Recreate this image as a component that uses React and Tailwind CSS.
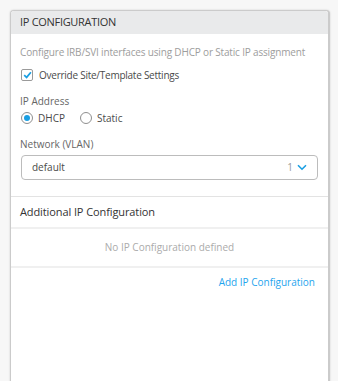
import React, { useState } from "react";

function Radio({ checked, label, onClick, className = "" }) {
  return (
    <label className={`flex items-center gap-[5px] ${className}`} onClick={onClick}>
      <span className="flex h-[12px] w-[12px] items-center justify-center rounded-full border border-[#8f8f8f] bg-white">
        {checked && <span className="h-[6px] w-[6px] rounded-full bg-[#1a9fe3]" />}
      </span>
      {label}
    </label>
  );
}

export default function App() {
  const [override, setOverride] = useState(true);
  const [mode, setMode] = useState("dhcp");

  return (
    <div
      className="h-[381px] w-[338px] overflow-hidden bg-[#f7f7f7] pl-[10px] pt-[10px]"
      style={{ fontFamily: "'Open Sans', 'Noto Sans', sans-serif" }}
    >
      <div className="h-[400px] w-[320px] rounded-t-[4px] border border-r-2 border-[#cbcbcb] bg-white shadow-[0_0_2px_rgba(0,0,0,0.18)]">
        {/* Header */}
        <div className="flex h-[23px] items-center rounded-t-[3px] bg-[#e9eaeb] px-[9px] text-[11px] font-medium tracking-[-0.3px] text-[#333]">
          IP CONFIGURATION
        </div>

        {/* Main settings */}
        <div className="px-[9px] pt-[10px] pb-[16px] text-[10px]">
          <div className="flex h-[16px] items-center tracking-[-0.17px] text-[#9d9d9d]">
            Configure IRB/SVI interfaces using DHCP or Static IP assignment
          </div>

          <label className="mt-[7px] flex h-[16px] items-center gap-[6px] pl-[1px] tracking-[-0.25px] text-[#4a4a4a]">
            <span
              onClick={() => setOverride(!override)}
              className="flex h-[12px] w-[12px] items-center justify-center rounded-[2px] border border-[#9a9a9a] bg-white"
            >
              {override && (
                <svg width="9" height="8" viewBox="0 0 9 8">
                  <path d="M1.2 4.2 L3.6 6.4 L7.9 1.3" fill="none" stroke="#1a9fe3" strokeWidth="1.7" />
                </svg>
              )}
            </span>
            Override Site/Template Settings
          </label>

          <div className="mt-[10px] flex h-[16px] items-center text-[#666]">IP Address</div>
          <div className="mt-[1px] flex h-[16px] items-center pl-[1px] text-[#4a4a4a]">
            <Radio checked={mode === "dhcp"} label="DHCP" onClick={() => setMode("dhcp")} />
            <Radio
              checked={mode === "static"}
              label="Static"
              onClick={() => setMode("static")}
              className="ml-[15px]"
            />
          </div>

          <div className="mt-[10px] flex h-[16px] items-center text-[#666]">Network (VLAN)</div>
          <div className="mt-[3px] ml-[1px] mr-[1px] flex h-[25px] items-center rounded-[4px] border border-[#bcbcbc] pl-[10px] pr-[10px] text-[#4a4a4a]">
            <span className="flex-1">default</span>
            <span className="text-[#9a9a9a]">1</span>
            <svg className="ml-[4px]" width="10" height="7" viewBox="0 0 10 7">
              <path d="M1 1.2 L5 5.2 L9 1.2" fill="none" stroke="#1a9fe3" strokeWidth="1.6" />
            </svg>
          </div>
        </div>

        {/* Additional IP Configuration */}
        <div className="border-t border-[#e3e3e3]">
          <div className="flex h-[30px] items-center px-[9px] text-[11px] tracking-[-0.1px] text-[#333]">
            Additional IP Configuration
          </div>
          <div className="flex h-[41px] items-center justify-center border-y-2 border-[#f0f0f0] text-[10px] text-[#ababab]">
            No IP Configuration defined
          </div>
          <div className="flex justify-end px-[13px] pt-[7px] text-[10px] leading-[14px] text-[#1fa5ee]">
            Add IP Configuration
          </div>
        </div>
      </div>
    </div>
  );
}
